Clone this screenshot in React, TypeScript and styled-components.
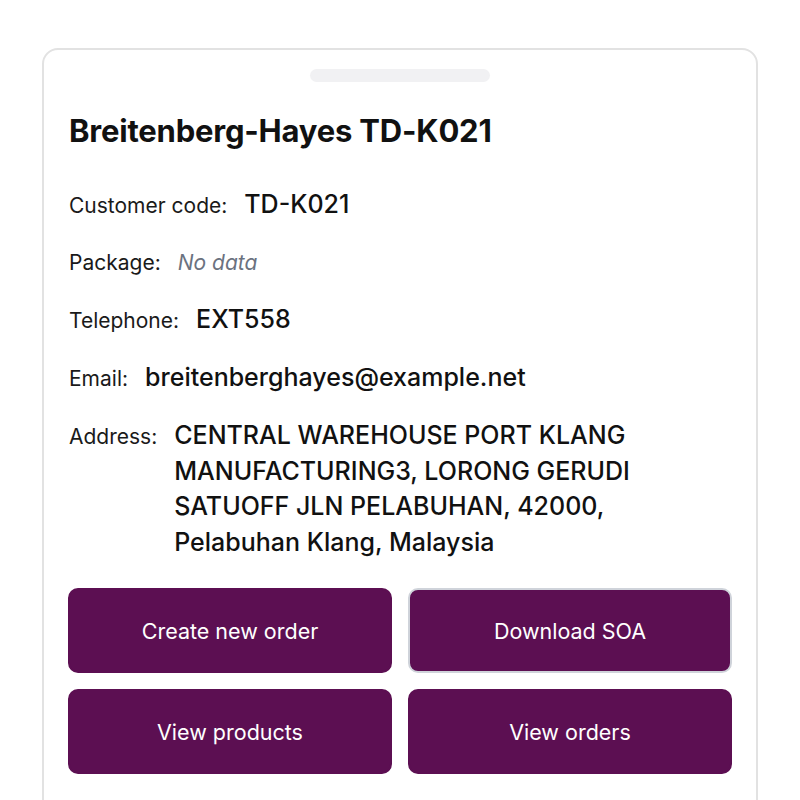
import React from 'react';
import styled, { createGlobalStyle } from 'styled-components';

const GlobalStyle = createGlobalStyle`
  html, body {
    margin: 0;
    padding: 0;
    background: #ffffff;
  }
  body {
    font-family: Inter, "Noto Sans", "Liberation Sans", sans-serif;
    color: #111111;
  }
`;

const Page = styled.div`
  padding: 48px 42px 0 42px;
  height: 800px;
  box-sizing: border-box;
  overflow: hidden;
`;

const Card = styled.div`
  border: 2px solid #e2e2e2;
  border-radius: 16px;
  padding: 19px 24px 40px 24px;
  background: #ffffff;
`;

const Handle = styled.div`
  width: 180px;
  height: 13px;
  border-radius: 7px;
  background: #f1f1f3;
  margin: 0 auto;
`;

const Title = styled.h1`
  margin: 30px 0 0 1px;
  font-size: 31px;
  font-weight: 700;
  letter-spacing: -0.2px;
  color: #111111;
  line-height: 38px;
`;

const InfoList = styled.div`
  margin-top: 37px;
  display: flex;
  flex-direction: column;
  gap: 21.5px;
`;

const Row = styled.div`
  display: flex;
  align-items: baseline;
  gap: 17px;
  margin-left: 1px;
`;

const Label = styled.span`
  font-size: 21px;
  color: #1a1a1a;
  white-space: nowrap;
  line-height: 35.5px;
`;

const Value = styled.span<{ $empty?: boolean }>`
  font-size: ${p => (p.$empty ? '21px' : '25px')};
  font-weight: ${p => (p.$empty ? 400 : 500)};
  font-style: ${p => (p.$empty ? 'italic' : 'normal')};
  color: ${p => (p.$empty ? '#6b7280' : '#111111')};
  line-height: 35.5px;
`;

const ButtonGrid = styled.div`
  margin-top: 28px;
  display: grid;
  grid-template-columns: 1fr 1fr;
  gap: 16px;
`;

const ActionButton = styled.button<{ $focused?: boolean }>`
  height: 85px;
  border-radius: 10px;
  border: 2px solid ${p => (p.$focused ? '#cfd3da' : '#5c0f52')};
  background: #5c0f52;
  color: #ffffff;
  font-family: Inter, "Noto Sans", "Liberation Sans", sans-serif;
  font-size: 21.5px;
  font-weight: 400;
  cursor: pointer;
`;

const rows: { label: string; value?: string }[] = [
  { label: 'Customer code:', value: 'TD-K021' },
  { label: 'Package:' },
  { label: 'Telephone:', value: 'EXT558' },
  { label: 'Email:', value: 'breitenberghayes@example.net' },
  {
    label: 'Address:',
    value:
      'CENTRAL WAREHOUSE PORT KLANG MANUFACTURING3, LORONG GERUDI SATUOFF JLN PELABUHAN, 42000, Pelabuhan Klang, Malaysia',
  },
];

const actions = ['Create new order', 'Download SOA', 'View products', 'View orders'];

export default function App() {
  return (
    <>
      <GlobalStyle />
      <Page>
        <Card>
          <Handle />
          <Title>Breitenberg-Hayes TD-K021</Title>
          <InfoList>
            {rows.map(r => (
              <Row key={r.label}>
                <Label>{r.label}</Label>
                {r.value ? <Value>{r.value}</Value> : <Value $empty>No data</Value>}
              </Row>
            ))}
          </InfoList>
          <ButtonGrid>
            {actions.map(a => (
              <ActionButton key={a} $focused={a === 'Download SOA'}>
                {a}
              </ActionButton>
            ))}
          </ButtonGrid>
        </Card>
      </Page>
    </>
  );
}
